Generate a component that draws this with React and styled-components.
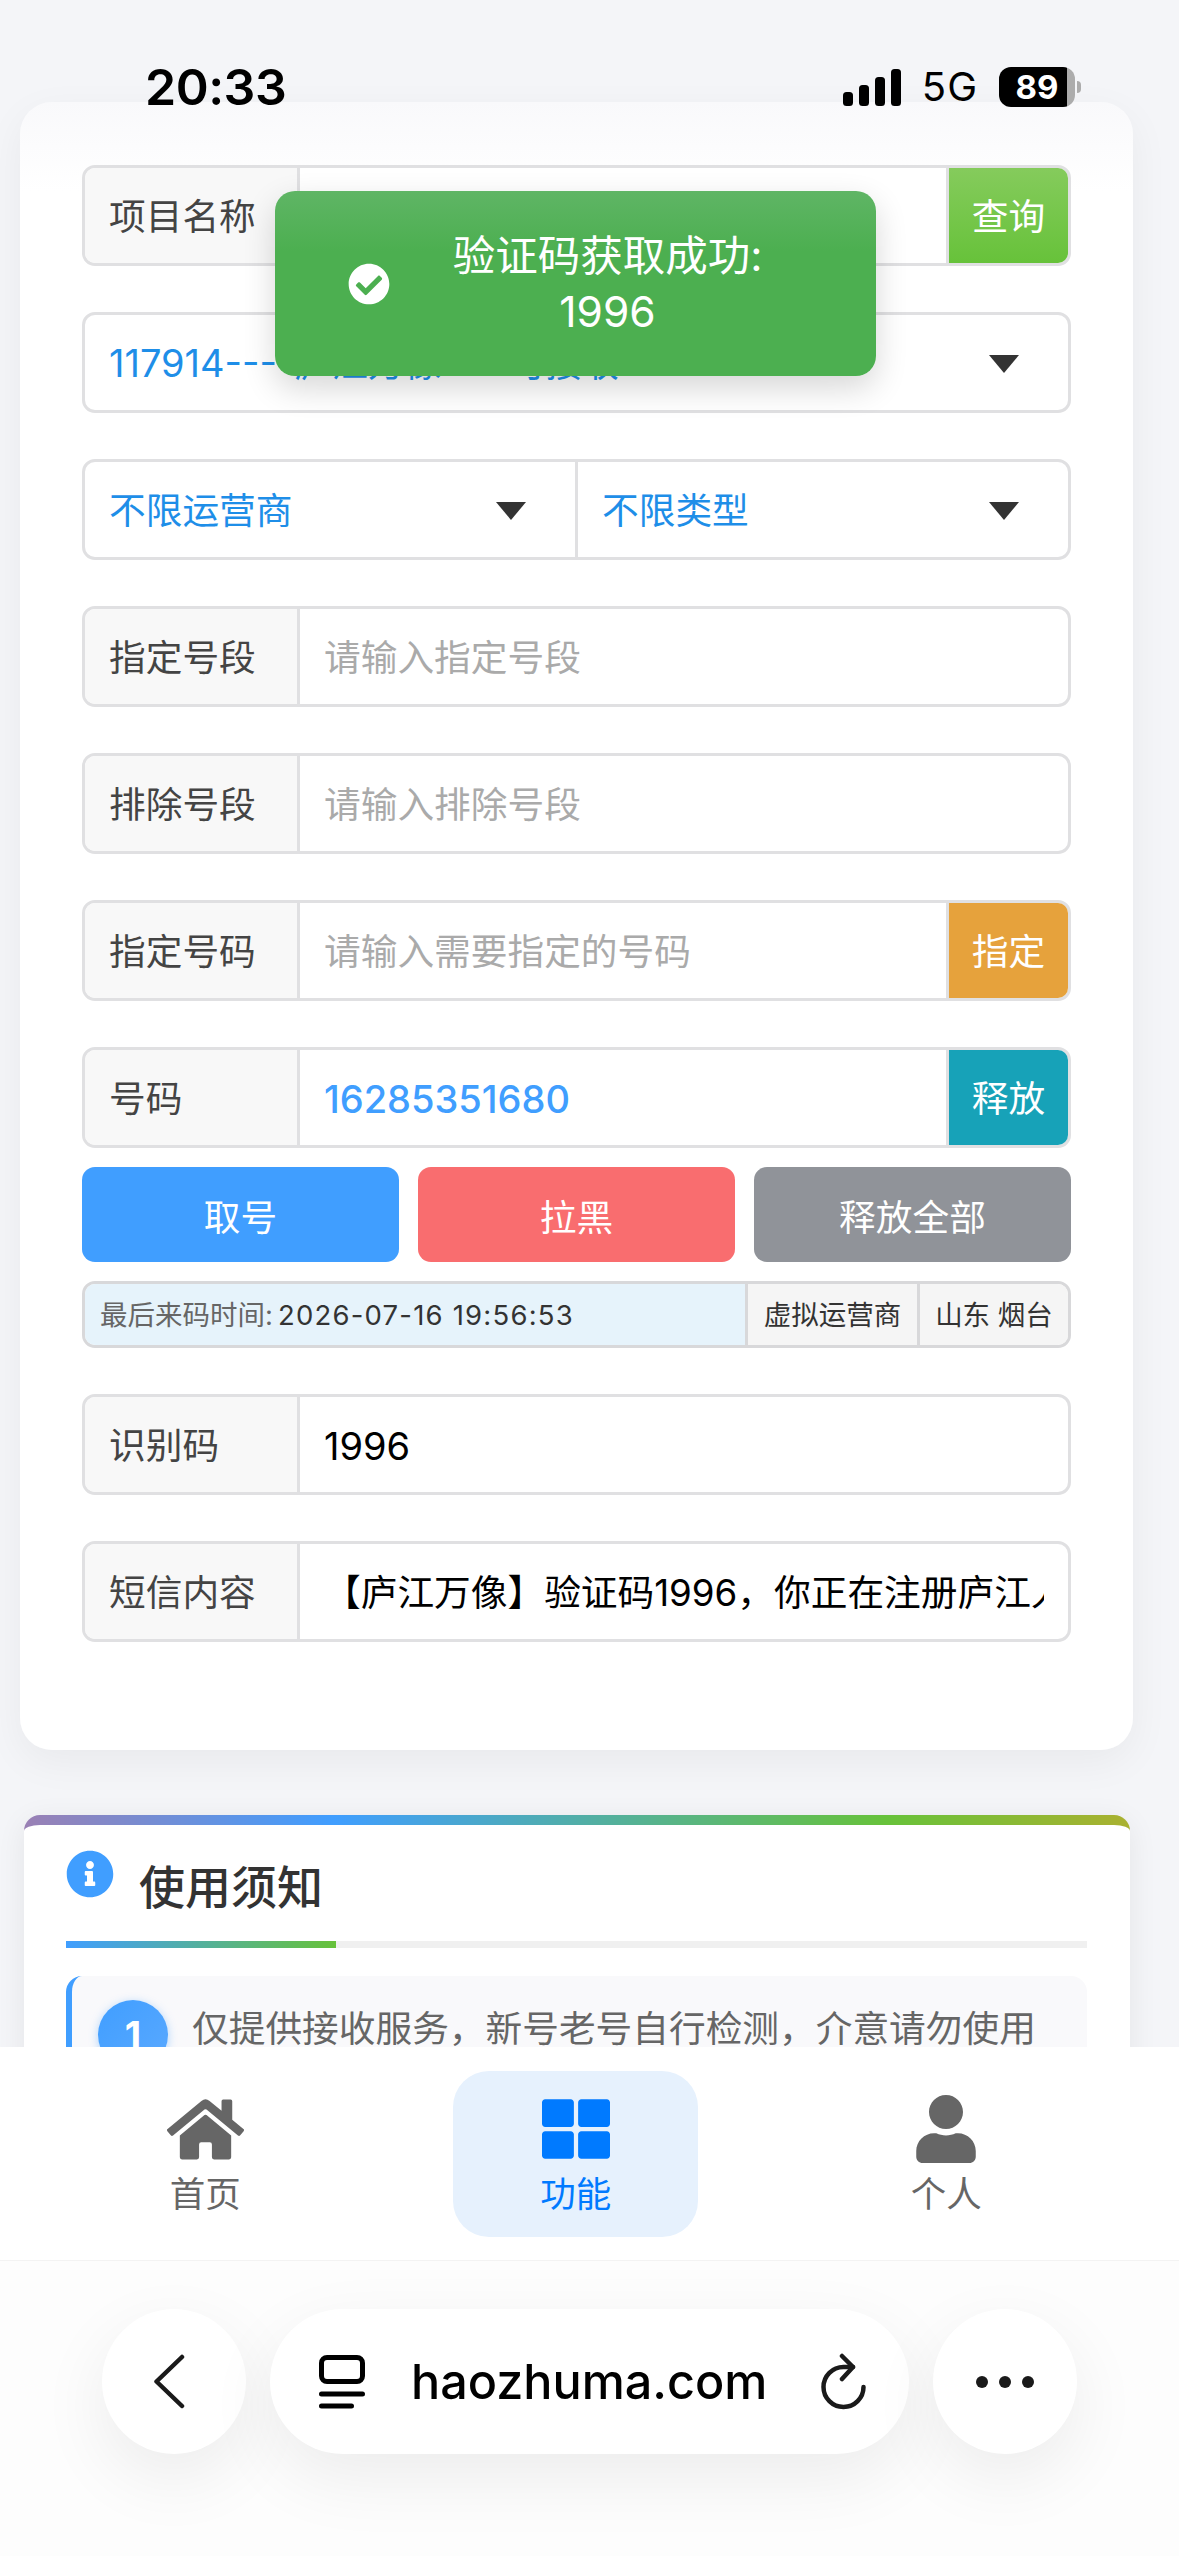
import React from "react";
import styled, { createGlobalStyle } from "styled-components";
import { FaHome, FaThLarge, FaUser, FaInfoCircle, FaCheckCircle } from "react-icons/fa";

const GlobalStyle = createGlobalStyle`
  * { box-sizing: border-box; }
  html, body { margin: 0; padding: 0; background: #f4f5f8; }
  body { font-family: Inter, "Noto Sans CJK SC", sans-serif; }
`;

const Page = styled.div`
  position: relative;
  width: 1179px;
  height: 2556px;
  overflow: hidden;
  padding: 102px 46px 0 20px;
  background: #f4f5f8;
`;

const StatusBar = styled.div`
  position: absolute;
  top: 62px;
  left: 145px;
  right: 104px;
  height: 50px;
  z-index: 5;
  display: flex;
  align-items: center;
  justify-content: space-between;
`;

const Clock = styled.div`
  font-size: 50px;
  font-weight: 600;
  line-height: 50px;
  color: #000;
  letter-spacing: -0.5px;
`;

const StatusRight = styled.div`
  display: flex;
  align-items: center;
  gap: 21px;
`;

const NetworkLabel = styled.span`
  font-size: 40px;
  font-weight: 400;
  line-height: 40px;
  letter-spacing: 1px;
  color: #000;
`;

const Battery = styled.div`
  position: relative;
  width: 76px;
  height: 40px;
  border-radius: 12px;
  background: linear-gradient(90deg, #000 89%, #acacac 89%);
  color: #fff;
  font-size: 33px;
  font-weight: 700;
  line-height: 40px;
  text-align: center;
  &::after {
    content: "";
    position: absolute;
    right: -6px;
    top: 14px;
    width: 4px;
    height: 12px;
    border-radius: 0 4px 4px 0;
    background: #acacac;
  }
`;

const MainCard = styled.section`
  display: flex;
  flex-direction: column;
  gap: 46px;
  padding: 63px 62px 108px;
  border-radius: 32px;
  background: linear-gradient(180deg, #f9f9fb 0, #fff 90px);
  box-shadow: 0 12px 40px rgba(0, 0, 0, 0.05);
`;

const Group = styled.div`
  display: flex;
  flex-direction: column;
  gap: 19px;
`;

const Row = styled.div`
  display: flex;
  height: 101px;
  border: 3px solid #e0e0e2;
  border-radius: 13px;
  overflow: hidden;
  background: #fff;
  font-size: 36.7px;
  line-height: 48px;
`;

const Label = styled.div`
  flex: 0 0 215px;
  display: flex;
  align-items: center;
  padding: 2px 0 0 24px;
  background: #f8f8f8;
  border-right: 3px solid #e0e0e2;
  color: #444;
`;

const Field = styled.div`
  flex: 1;
  min-width: 0;
  display: flex;
  align-items: center;
  padding: 2px 24px 0;
`;

const FieldText = styled.div`
  white-space: nowrap;
  overflow: hidden;
  color: ${(p) => p.$color || "#000"};
  font-weight: ${(p) => p.$weight || 400};
  font-size: ${(p) => (p.$digits ? "38px" : "inherit")};
`;

const SideButton = styled.div`
  flex: 0 0 122px;
  display: flex;
  align-items: center;
  justify-content: center;
  padding-top: 2px;
  border-left: 3px solid #e0e0e2;
  background: ${(p) => p.$bg};
  color: #fff;
`;

const SelectCell = styled.div`
  flex: 1;
  display: flex;
  align-items: center;
  justify-content: space-between;
  padding: 2px 49px 0 24px;
  color: #1e8ee8;
  white-space: nowrap;
  & + & {
    border-left: 3px solid #e0e0e2;
  }
`;

const SelectDigits = styled.span`
  font-size: 38px;
`;

const Caret = styled.span`
  width: 0;
  height: 0;
  border-left: 15px solid transparent;
  border-right: 15px solid transparent;
  border-top: 18px solid #333;
`;

const ActionRow = styled.div`
  display: grid;
  grid-template-columns: repeat(3, 1fr);
  gap: 19px;
`;

const ActionButton = styled.div`
  height: 95px;
  display: flex;
  align-items: center;
  justify-content: center;
  border-radius: 13px;
  background: ${(p) => p.$bg};
  color: #fff;
  font-size: 36.7px;
`;

const InfoBar = styled.div`
  display: flex;
  height: 67px;
  border: 3px solid #d8d8da;
  border-radius: 13px;
  overflow: hidden;
  font-size: 27.5px;
  line-height: 36px;
`;

const InfoTime = styled.div`
  flex: 1;
  display: flex;
  align-items: center;
  padding-left: 15px;
  background: #e6f3fb;
  color: #333;
  white-space: nowrap;
  letter-spacing: 1.2px;
  span {
    color: #666;
    margin-right: 5px;
    letter-spacing: 0;
  }
`;

const InfoCell = styled.div`
  display: flex;
  align-items: center;
  justify-content: center;
  width: ${(p) => p.$width}px;
  border-left: 3px solid #d8d8da;
  background: #f5f5f5;
  color: #333;
  white-space: nowrap;
`;

const Toast = styled.div`
  position: absolute;
  top: 191px;
  left: 275px;
  width: 601px;
  height: 185px;
  z-index: 4;
  display: flex;
  align-items: center;
  border-radius: 20px;
  background: linear-gradient(180deg, #5fb565 0, #4caf50 60px);
  box-shadow: 0 12px 32px rgba(0, 0, 0, 0.16);
  color: #fff;
  svg {
    margin-left: 73px;
    flex: none;
  }
`;

const ToastText = styled.div`
  flex: 1;
  text-align: center;
  padding-right: 51px;
  font-size: 42.5px;
  line-height: 56px;
`;

const NoticeCard = styled.section`
  margin: 65px 3px 0 4px;
  height: 500px;
  padding: 25px 43px 0 42px;
  border-radius: 16px;
  border-top: 10px solid transparent;
  background:
    linear-gradient(#fff, #fff) padding-box,
    linear-gradient(90deg, #9a80b4 0, #409eff 28%, #67c23a 78%, #aab130 100%) border-box;
  box-shadow: 0 6px 30px rgba(0, 0, 0, 0.07);
`;

const NoticeHead = styled.div`
  display: flex;
  align-items: flex-start;
  gap: 25px;
  height: 81px;
  color: #409eff;
`;

const NoticeTitle = styled.h2`
  margin: 9px 0 0;
  font-size: 46px;
  font-weight: 500;
  line-height: 56px;
  color: #333;
`;

const Divider = styled.div`
  height: 7px;
  margin: 10px 0 28px;
  background: #f0f0f0;
  &::before {
    content: "";
    display: block;
    width: 270px;
    height: 100%;
    background: linear-gradient(90deg, #409eff, #67c23a);
  }
`;

const NoticeItem = styled.div`
  display: flex;
  align-items: flex-start;
  gap: 24px;
  padding: 24px 20px 40px 26px;
  border-left: 6px solid #409eff;
  border-radius: 16px;
  background: #f9f9fb;
`;

const Badge = styled.div`
  flex: none;
  width: 70px;
  height: 70px;
  border-radius: 50%;
  display: flex;
  align-items: center;
  justify-content: center;
  background: linear-gradient(135deg, #409eff, #5aa9ff);
  box-shadow: 0 2px 10px rgba(64, 158, 255, 0.4);
  color: #fff;
  font-size: 38px;
  font-weight: 700;
`;

const NoticeText = styled.div`
  padding-top: 3px;
  font-size: 36.7px;
  line-height: 52px;
  color: #666;
  white-space: nowrap;
`;

const BottomArea = styled.div`
  position: absolute;
  left: 0;
  right: 0;
  top: 2047px;
  height: 509px;
  z-index: 3;
  background: #fdfdfd;
`;

const Nav = styled.nav`
  display: grid;
  grid-template-columns: repeat(3, 370.5px);
  align-items: start;
  height: 214px;
  padding: 24px 0 0 20px;
  background: #fff;
  border-bottom: 1px solid #f3f3f3;
`;

const NavItem = styled.div`
  justify-self: center;
  width: 245px;
  height: 166px;
  display: flex;
  flex-direction: column;
  align-items: center;
  padding-top: 23px;
  border-radius: 36px;
  background: ${(p) => (p.$active ? "#e6f1fd" : "transparent")};
  color: ${(p) => (p.$active ? "#007aff" : "#666")};
`;

const NavIcon = styled.div`
  height: 70px;
  display: flex;
  align-items: center;
  justify-content: center;
`;

const NavLabel = styled.div`
  margin-top: 8px;
  font-size: 35.5px;
  line-height: 46px;
`;

const BrowserBar = styled.div`
  display: flex;
  gap: 24px;
  padding: 48px 0 0 102px;
`;

const RoundButton = styled.div`
  width: 144px;
  height: 145px;
  display: flex;
  align-items: center;
  justify-content: center;
  border-radius: 50%;
  background: #fff;
  box-shadow: 0 24px 70px rgba(0, 0, 0, 0.07);
`;

const UrlPill = styled.div`
  width: 639px;
  height: 145px;
  display: flex;
  align-items: center;
  padding: 0 42px 0 49px;
  border-radius: 73px;
  background: #fff;
  box-shadow: 0 24px 70px rgba(0, 0, 0, 0.07);
`;

const UrlText = styled.div`
  flex: 1;
  padding-left: 46px;
  font-size: 48.5px;
  font-weight: 500;
  line-height: 60px;
  color: #000;
`;

const SignalIcon = () => (
  <svg width="58" height="37" viewBox="0 0 58 37">
    <rect x="0" y="23" width="10" height="14" rx="3.500" fill="#000" />
    <rect x="16" y="16" width="10" height="21" rx="3.500" fill="#000" />
    <rect x="32" y="8" width="10" height="29" rx="3.500" fill="#000" />
    <rect x="48" y="0" width="10" height="37" rx="3.500" fill="#000" />
  </svg>
);

const BackIcon = () => (
  <svg width="32" height="55" viewBox="0 0 32 55" fill="none" style={{ marginRight: 10 }}>
    <path d="M29 3 3.500 27.500 29 52" stroke="#1a1a1a" strokeWidth="4.500" strokeLinecap="round" strokeLinejoin="round" />
  </svg>
);

const ReaderIcon = () => (
  <svg width="46" height="54" viewBox="0 0 46 54" fill="none" stroke="#000" strokeWidth="5" strokeLinecap="round">
    <rect x="2.500" y="2.500" width="41" height="24" rx="5.500" />
    <path d="M2.500 39h41M2.500 51h30" />
  </svg>
);

const ReloadIcon = () => (
  <svg width="48" height="58" viewBox="0 0 48 58" fill="none" stroke="#1a1a1a" strokeWidth="4.500" strokeLinecap="round" strokeLinejoin="round">
    <path d="M34 14h-9.500a20 20 0 1 0 20 20" />
    <path d="M23 3l11 11-11 12" />
  </svg>
);

const DotsIcon = () => (
  <svg width="58" height="14" viewBox="0 0 58 14" fill="#1a1a1a">
    <circle cx="6" cy="7" r="6" />
    <circle cx="29" cy="7" r="6" />
    <circle cx="52" cy="7" r="6" />
  </svg>
);

const InputRow = ({ label, value, color, weight, digits, button, buttonBg }) => (
  <Row>
    <Label>{label}</Label>
    <Field>
      <FieldText $color={color} $weight={weight} $digits={digits}>{value}</FieldText>
    </Field>
    {button && <SideButton $bg={buttonBg}>{button}</SideButton>}
  </Row>
);

export default function App() {
  return (
    <Page>
      <GlobalStyle />
      <StatusBar>
        <Clock>20:33</Clock>
        <StatusRight>
          <SignalIcon />
          <NetworkLabel>5G</NetworkLabel>
          <Battery>89</Battery>
        </StatusRight>
      </StatusBar>

      <Toast>
        <FaCheckCircle size={42} />
        <ToastText>
          验证码获取成功:
          <br />
          1996
        </ToastText>
      </Toast>

      <MainCard>
        <InputRow label="项目名称" button="查询" buttonBg="linear-gradient(180deg, #85cb5c, #67c23a)" />
        <Row>
          <SelectCell>
            <span>
              <SelectDigits>117914----</SelectDigits>庐江万像----可接收
            </span>
            <Caret />
          </SelectCell>
        </Row>
        <Row>
          <SelectCell>
            不限运营商
            <Caret />
          </SelectCell>
          <SelectCell>
            不限类型
            <Caret />
          </SelectCell>
        </Row>
        <InputRow label="指定号段" value="请输入指定号段" color="#aaa" />
        <InputRow label="排除号段" value="请输入排除号段" color="#aaa" />
        <InputRow label="指定号码" value="请输入需要指定的号码" color="#aaa" button="指定" buttonBg="#e6a23c" />
        <Group>
          <InputRow label="号码" value="16285351680" color="#409eff" weight={500} digits button="释放" buttonBg="#17a2b8" />
          <ActionRow>
            <ActionButton $bg="#409eff">取号</ActionButton>
            <ActionButton $bg="#f96d6f">拉黑</ActionButton>
            <ActionButton $bg="#909399">释放全部</ActionButton>
          </ActionRow>
          <InfoBar>
            <InfoTime>
              <span>最后来码时间:</span>2026-07-16 19:56:53
            </InfoTime>
            <InfoCell $width={172}>虚拟运营商</InfoCell>
            <InfoCell $width={151}>山东 烟台</InfoCell>
          </InfoBar>
        </Group>
        <InputRow label="识别码" value="1996" digits />
        <InputRow label="短信内容" value="【庐江万像】验证码1996，你正在注册庐江人才网账号，请勿泄露" />
      </MainCard>

      <NoticeCard>
        <NoticeHead>
          <FaInfoCircle size={48} />
          <NoticeTitle>使用须知</NoticeTitle>
        </NoticeHead>
        <Divider />
        <NoticeItem>
          <Badge>1</Badge>
          <NoticeText>仅提供接收服务，新号老号自行检测，介意请勿使用</NoticeText>
        </NoticeItem>
      </NoticeCard>

      <BottomArea>
        <Nav>
          <NavItem>
            <NavIcon>
              <FaHome size={77} />
            </NavIcon>
            <NavLabel>首页</NavLabel>
          </NavItem>
          <NavItem $active>
            <NavIcon>
              <FaThLarge size={68} />
            </NavIcon>
            <NavLabel>功能</NavLabel>
          </NavItem>
          <NavItem>
            <NavIcon>
              <FaUser size={68} />
            </NavIcon>
            <NavLabel>个人</NavLabel>
          </NavItem>
        </Nav>
        <BrowserBar>
          <RoundButton>
            <BackIcon />
          </RoundButton>
          <UrlPill>
            <ReaderIcon />
            <UrlText>haozhuma.com</UrlText>
            <ReloadIcon />
          </UrlPill>
          <RoundButton>
            <DotsIcon />
          </RoundButton>
        </BrowserBar>
      </BottomArea>
    </Page>
  );
}
